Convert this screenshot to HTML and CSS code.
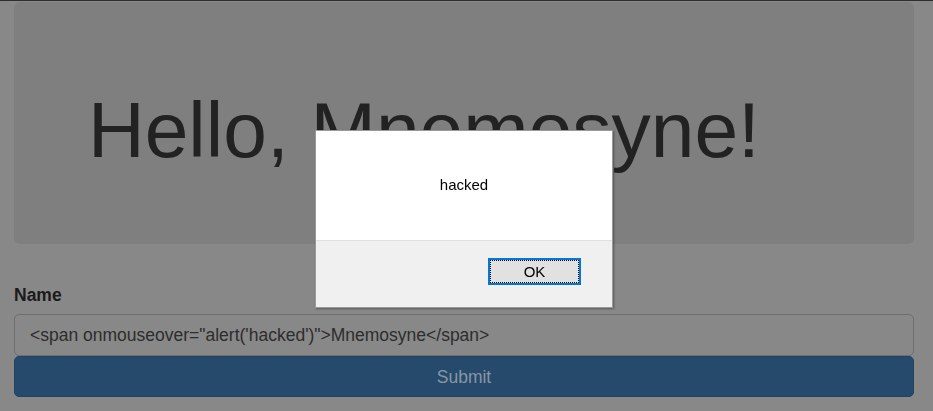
FILE: index.html
```html
<!DOCTYPE html>
<html lang="en">
<head>
<meta charset="utf-8">
<title>Hello</title>
<link rel="stylesheet" href="styles.css">
</head>
<body>
<div class="topline"></div>
<main class="container">
  <section class="jumbotron">
    <h1 class="greeting">Hello, Mnemosyne!</h1>
  </section>
  <form class="form">
    <label class="label" for="name">Name</label>
    <input class="input" id="name" type="text" value="<span onmouseover=&quot;alert('hacked')&quot;>Mnemosyne</span>">
    <button class="submit" type="button">Submit</button>
  </form>
</main>
<div class="dialog" role="alertdialog">
  <div class="dialog-body">hacked</div>
  <div class="dialog-footer">
    <button class="ok" type="button"><span class="ok-focus">OK</span></button>
  </div>
</div>
</body>
</html>
```
FILE: styles.css
```css
html, body {
  margin: 0;
  padding: 0;
}
body {
  background: #888888;
  font-family: "Liberation Sans", Arial, sans-serif;
  height: 411px;
  overflow: hidden;
}
.topline {
  height: 1px;
  background: #2e2e2e;
  margin-bottom: 1px;
}
.container {
  padding: 0 19px 0 14px;
}
.jumbotron {
  background: #7f7f7f;
  border-radius: 6px;
  height: 242px;
  box-sizing: border-box;
  padding: 84px 0 0 74px;
  margin-bottom: 39px;
}
.greeting {
  margin: 0;
  font-size: 78.5px;
  line-height: 88px;
  font-weight: 400;
  color: #222222;
  white-space: nowrap;
}
.form {
  display: flex;
  flex-direction: column;
}
.label {
  display: block;
  font-size: 17.5px;
  line-height: 25px;
  font-weight: 700;
  color: #1b1b1b;
  margin-bottom: 6px;
}
.input {
  height: 42px;
  box-sizing: border-box;
  border: 1px solid #6f6f6f;
  border-radius: 5px;
  background: #888888;
  padding: 0 15px;
  font-family: "Liberation Sans", Arial, sans-serif;
  font-size: 17.5px;
  color: #2d2d2d;
  outline: none;
  margin: 0;
}
.submit {
  height: 41px;
  box-sizing: border-box;
  border: 1px solid #21445f;
  border-radius: 5px;
  background: #254a6b;
  color: #8896a4;
  font-family: "Liberation Sans", Arial, sans-serif;
  font-size: 17.5px;
  margin: 0;
  padding: 0 0 0 0;
  line-height: 41px;
}
.dialog {
  position: fixed;
  left: 315px;
  top: 130px;
  width: 298px;
  height: 178px;
  box-sizing: border-box;
  border: 1px solid #9a9a9a;
  background: #ffffff;
  box-shadow: 1px 1px 2px rgba(0, 0, 0, 0.35);
  display: flex;
  flex-direction: column;
}
.dialog-body {
  height: 109px;
  box-sizing: border-box;
  padding-top: 45px;
  text-align: center;
  font-size: 15px;
  line-height: 18px;
  color: #000000;
}
.dialog-footer {
  flex: 1;
  background: #f0f0f0;
  border-top: 1px solid #dfdfdf;
  display: flex;
  justify-content: flex-end;
  align-items: flex-start;
  padding: 17px 31px 0 0;
}
.ok {
  width: 93px;
  height: 27px;
  box-sizing: border-box;
  border: 2px solid #0078d7;
  background: #e1e1e1;
  padding: 0;
  margin: 0;
  display: flex;
}
.ok-focus {
  flex: 1;
  border: 1px dotted #000000;
  display: flex;
  align-items: center;
  justify-content: center;
  font-family: "Liberation Sans", Arial, sans-serif;
  font-size: 15px;
  color: #000000;
}
```
